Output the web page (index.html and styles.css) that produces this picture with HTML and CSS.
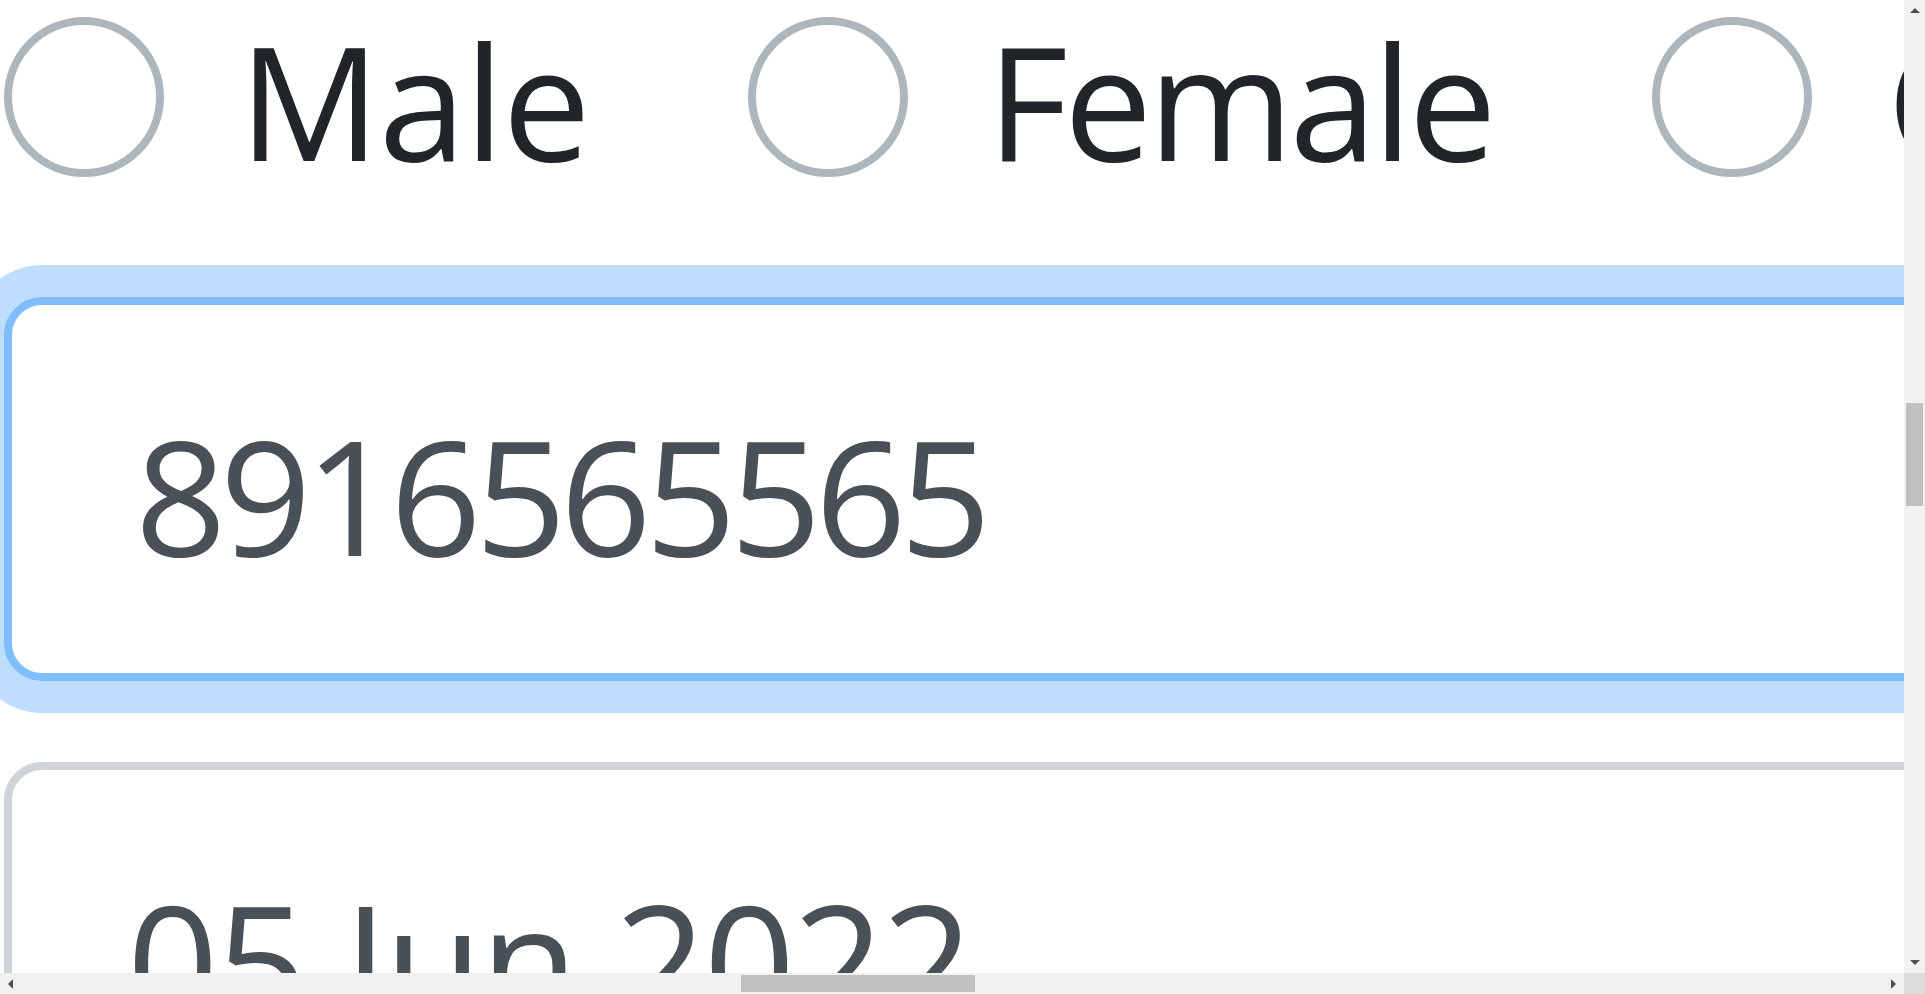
FILE: index.html
```html
<!DOCTYPE html>
<html lang="en">
<head>
<meta charset="utf-8">
<title>Form</title>
<link rel="stylesheet" href="styles.css">
</head>
<body>
<div class="screen">
  <div class="viewport">
    <div class="page">
      <div class="radio-row">
        <label class="radio-item r1"><span class="radio"></span><span class="radio-label">Male</span></label>
        <label class="radio-item r2"><span class="radio"></span><span class="radio-label">Female</span></label>
        <label class="radio-item r3"><span class="radio"></span><span class="radio-label">Other</span></label>
      </div>
      <div class="field focused"><span class="field-value">8916565565</span></div>
      <div class="field date"><span class="field-value">05 Jun 2022</span></div>
    </div>
  </div>
  <div class="vscroll">
    <div class="sb-btn"><span class="arrow arrow-up"></span></div>
    <div class="sb-track"><div class="vthumb"></div></div>
    <div class="sb-btn"><span class="arrow arrow-down"></span></div>
  </div>
  <div class="hscroll">
    <div class="sb-btn"><span class="arrow arrow-left"></span></div>
    <div class="sb-track"><div class="hthumb"></div></div>
    <div class="sb-btn"><span class="arrow arrow-right"></span></div>
  </div>
  <div class="corner"></div>
</div>
</body>
</html>
```

FILE: styles.css
```css
html, body {
  margin: 0;
  padding: 0;
  overflow: hidden;
  background: #ffffff;
}

.screen {
  display: grid;
  grid-template-columns: 1904px 21px;
  grid-template-rows: 973px 21px;
  width: 1925px;
  height: 994px;
}

.viewport {
  grid-column: 1;
  grid-row: 1;
  overflow: hidden;
  background: #ffffff;
  font-family: "Open Sans", "Noto Sans", sans-serif;
}

.page {
  padding: 17px 0 0 4px;
}

.radio-row {
  display: flex;
  align-items: flex-start;
  white-space: nowrap;
  height: 160px;
}

.radio-item {
  display: flex;
  align-items: flex-start;
  flex: none;
}

.r1 { width: 744px; }
.r2 { width: 904px; }

.radio {
  flex: none;
  box-sizing: border-box;
  width: 160px;
  height: 160px;
  border: 8px solid #adb5bd;
  border-radius: 50%;
  background: #ffffff;
}

.radio-label {
  margin-left: 75px;
  margin-top: 3px;
  font-size: 157px;
  line-height: 160px;
  letter-spacing: -1.5px;
  color: #212529;
}

.r2 .radio-label {
  margin-left: 79px;
  letter-spacing: -4px;
}

.field {
  box-sizing: border-box;
  width: 2400px;
  height: 384px;
  margin-top: 81px;
  padding: 69px 0 0 123px;
  border: 8px solid #ced4da;
  border-radius: 38px;
  background: #ffffff;
  font-size: 160px;
  line-height: 240px;
  letter-spacing: -6.5px;
  color: #495057;
  white-space: nowrap;
}

.field.date {
  padding-left: 115px;
  letter-spacing: -2.5px;
}

.field.focused {
  margin-top: 120px;
  border-color: #80bdff;
  box-shadow: 0 0 0 32px #bfdeff;
}

/* scrollbars */
.vscroll {
  grid-column: 2;
  grid-row: 1;
  display: flex;
  flex-direction: column;
  background: #f1f1f1;
}

.hscroll {
  grid-column: 1;
  grid-row: 2;
  display: flex;
  flex-direction: row;
  background: #f1f1f1;
}

.corner {
  grid-column: 2;
  grid-row: 2;
  background: #dcdcdc;
}

.sb-btn {
  flex: none;
  width: 21px;
  height: 21px;
  display: flex;
  align-items: center;
  justify-content: center;
}

.sb-track {
  flex: 1;
  display: flex;
}

.vscroll .sb-track { flex-direction: column; }

.vthumb {
  margin: 382px 2px 0 2px;
  height: 103px;
  background: #c1c1c1;
}

.hthumb {
  margin: 2px 0 0 720px;
  width: 234px;
  height: 17px;
  background: #c1c1c1;
}

.arrow {
  width: 0;
  height: 0;
}

.arrow-up {
  border-left: 5px solid transparent;
  border-right: 5px solid transparent;
  border-bottom: 5px solid #505050;
}

.arrow-down {
  border-left: 5px solid transparent;
  border-right: 5px solid transparent;
  border-top: 5px solid #505050;
}

.arrow-left {
  border-top: 5px solid transparent;
  border-bottom: 5px solid transparent;
  border-right: 5px solid #505050;
}

.arrow-right {
  border-top: 5px solid transparent;
  border-bottom: 5px solid transparent;
  border-left: 5px solid #505050;
}
```
